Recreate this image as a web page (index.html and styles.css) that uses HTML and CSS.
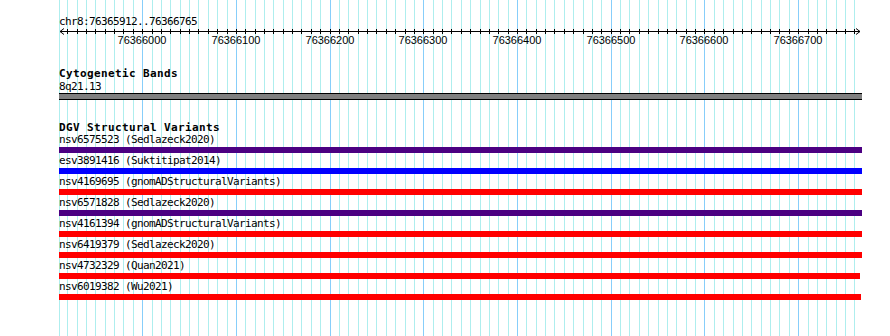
FILE: index.html
```html
<!DOCTYPE html>
<html lang="en">
<head>
    <meta charset="UTF-8">
    <title>chr8:76365912..76366765</title>
    <link rel="stylesheet" href="styles.css">
</head>
<body>
    <div class="panel">
        <!-- 10 bp grid, every 100 bp in a darker blue -->
        <svg class="grid" width="890" height="336">
            <path class="minor" d="M59.5 0V336M67.5 0V336M77.5 0V336M86.5 0V336M95.5 0V336M105.5 0V336M114.5 0V336M123.5 0V336M133.5 0V336M152.5 0V336M161.5 0V336M170.5 0V336M180.5 0V336M189.5 0V336M198.5 0V336M208.5 0V336M217.5 0V336M227.5 0V336M245.5 0V336M255.5 0V336M264.5 0V336M273.5 0V336M283.5 0V336M292.5 0V336M301.5 0V336M311.5 0V336M320.5 0V336M339.5 0V336M348.5 0V336M358.5 0V336M367.5 0V336M376.5 0V336M386.5 0V336M395.5 0V336M405.5 0V336M414.5 0V336M433.5 0V336M442.5 0V336M451.5 0V336M461.5 0V336M470.5 0V336M480.5 0V336M489.5 0V336M498.5 0V336M508.5 0V336M526.5 0V336M536.5 0V336M545.5 0V336M554.5 0V336M564.5 0V336M573.5 0V336M583.5 0V336M592.5 0V336M601.5 0V336M620.5 0V336M629.5 0V336M639.5 0V336M648.5 0V336M658.5 0V336M667.5 0V336M676.5 0V336M686.5 0V336M695.5 0V336M714.5 0V336M723.5 0V336M733.5 0V336M742.5 0V336M751.5 0V336M761.5 0V336M770.5 0V336M779.5 0V336M789.5 0V336M808.5 0V336M817.5 0V336M826.5 0V336M836.5 0V336M845.5 0V336M854.5 0V336"/>
            <path class="major" d="M142.5 0V336M236.5 0V336M330.5 0V336M423.5 0V336M517.5 0V336M611.5 0V336M704.5 0V336M798.5 0V336"/>
        </svg>

        <div class="tracks">
            <div class="ruler">
                <div class="label">chr8:76365912..76366765</div>
                <svg class="scale" width="890" height="20">
                    <path class="axis" d="M60 3.5H860"/>
                    <path class="ticks" d="M67.5 1V6M77.5 1V6M86.5 1V6M95.5 1V6M105.5 1V6M114.5 1V6M123.5 1V6M133.5 1V6M142.5 1V6M152.5 1V6M161.5 1V6M170.5 1V6M180.5 1V6M189.5 1V6M198.5 1V6M208.5 1V6M217.5 1V6M227.5 1V6M236.5 1V6M245.5 1V6M255.5 1V6M264.5 1V6M273.5 1V6M283.5 1V6M292.5 1V6M301.5 1V6M311.5 1V6M320.5 1V6M330.5 1V6M339.5 1V6M348.5 1V6M358.5 1V6M367.5 1V6M376.5 1V6M386.5 1V6M395.5 1V6M405.5 1V6M414.5 1V6M423.5 1V6M433.5 1V6M442.5 1V6M451.5 1V6M461.5 1V6M470.5 1V6M480.5 1V6M489.5 1V6M498.5 1V6M508.5 1V6M517.5 1V6M526.5 1V6M536.5 1V6M545.5 1V6M554.5 1V6M564.5 1V6M573.5 1V6M583.5 1V6M592.5 1V6M601.5 1V6M611.5 1V6M620.5 1V6M629.5 1V6M639.5 1V6M648.5 1V6M658.5 1V6M667.5 1V6M676.5 1V6M686.5 1V6M695.5 1V6M704.5 1V6M714.5 1V6M723.5 1V6M733.5 1V6M742.5 1V6M751.5 1V6M761.5 1V6M770.5 1V6M779.5 1V6M789.5 1V6M798.5 1V6M808.5 1V6M817.5 1V6M826.5 1V6M836.5 1V6M845.5 1V6M854.5 1V6"/>
                    <path class="arrow" d="M64 0.5L60 3.5L64 6.5M856 0.5L860 3.5L856 6.5"/>
                    <text x="142" y="16">76366000</text>
                    <text x="236" y="16">76366100</text>
                    <text x="330" y="16">76366200</text>
                    <text x="423" y="16">76366300</text>
                    <text x="517" y="16">76366400</text>
                    <text x="611" y="16">76366500</text>
                    <text x="704" y="16">76366600</text>
                    <text x="798" y="16">76366700</text>
                </svg>
            </div>

            <div class="track cyto">
                <div class="title">Cytogenetic Bands</div>
                <div class="label">8q21.13</div>
                <div class="band"></div>
            </div>

            <div class="track dgv">
                <div class="title">DGV Structural Variants</div>
                <div class="label">nsv6575523 (Sedlazeck2020)</div>
                <div class="bar indigo" style="width: 803px"></div>
                <div class="label">esv3891416 (Suktitipat2014)</div>
                <div class="bar blue" style="width: 803px"></div>
                <div class="label">nsv4169695 (gnomADStructuralVariants)</div>
                <div class="bar red" style="width: 803px"></div>
                <div class="label">nsv6571828 (Sedlazeck2020)</div>
                <div class="bar indigo" style="width: 803px"></div>
                <div class="label">nsv4161394 (gnomADStructuralVariants)</div>
                <div class="bar red" style="width: 803px"></div>
                <div class="label">nsv6419379 (Sedlazeck2020)</div>
                <div class="bar red" style="width: 803px"></div>
                <div class="label">nsv4732329 (Quan2021)</div>
                <div class="bar red" style="width: 801px"></div>
                <div class="label">nsv6019382 (Wu2021)</div>
                <div class="bar red" style="width: 802px"></div>
            </div>
        </div>
    </div>
</body>
</html>
```

FILE: styles.css
```css
body {
    margin: 0;
    background: #ffffff;
}

.panel {
    position: relative;
    width: 890px;
    height: 336px;
    overflow: hidden;
    font-family: "DejaVu Sans Mono", monospace;
    font-size: 11px;
    color: #000000;
}

.grid {
    position: absolute;
    top: 0;
    left: 0;
}

.grid path {
    fill: none;
    stroke-width: 1;
    shape-rendering: crispEdges;
}

.grid .minor {
    stroke: #aeeeee;
}

.grid .major {
    stroke: #87cefa;
}

.tracks {
    position: relative;
}

.label,
.title {
    padding-left: 59px;
    white-space: nowrap;
    line-height: 12px;
}

.label {
    letter-spacing: -0.62px;
}

.title {
    font-weight: bold;
    letter-spacing: 0.38px;
}

.ruler .label {
    padding-top: 15px;
    line-height: 13px;
}

.scale {
    display: block;
    margin-bottom: 19px;
}

.scale .axis,
.scale .ticks {
    stroke: #000000;
    stroke-width: 1;
    shape-rendering: crispEdges;
}

.scale .arrow {
    fill: none;
    stroke: #000000;
    stroke-width: 1;
}

.scale text {
    font-family: "Liberation Sans", Arial, sans-serif;
    font-size: 11px;
    text-anchor: middle;
}

.cyto .title,
.cyto .label {
    line-height: 13px;
}

.band {
    margin-left: 59px;
    width: 803px;
    height: 5px;
    background: #808080;
    border-top: 1px solid #000000;
    border-bottom: 1px solid #000000;
}

.dgv {
    margin-top: 22px;
}

.bar {
    margin: 1px 0 2px 59px;
    height: 6px;
}

.bar.indigo {
    background: #4b0082;
}

.bar.blue {
    background: #0000ff;
}

.bar.red {
    background: #ff0000;
}
```
